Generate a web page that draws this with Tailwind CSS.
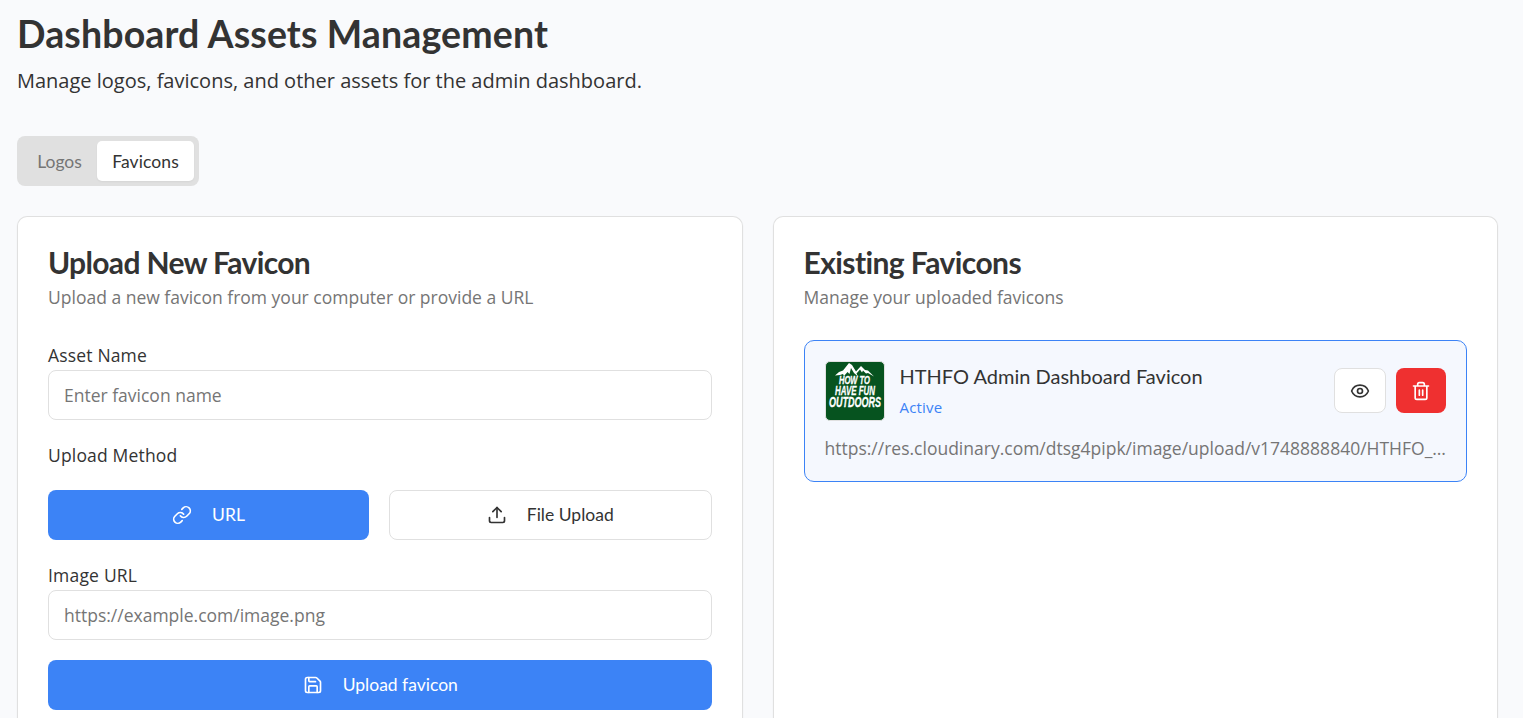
<!DOCTYPE html>
<html lang="en">
<head>
<meta charset="utf-8">
<title>Dashboard Assets Management</title>
<script src="https://cdn.jsdelivr.net/npm/@tailwindcss/browser@4"></script>
</head>
<body class="h-[718px] overflow-hidden bg-[#f9fafc] font-['Open_Sans',sans-serif] text-[17.5px] text-[#333333]">
<main class="h-[718px] overflow-hidden pl-[17px] pr-[25px] pt-[11px]">
  <h1 class="h-[45px] whitespace-nowrap font-['Lato',sans-serif] text-[37.5px] font-bold leading-[45px] tracking-[0.13px]">Dashboard Assets Management</h1>
  <p class="mt-[10px] h-[30px] text-[20px] leading-[30px]">Manage logos, favicons, and other assets for the admin dashboard.</p>

  <div class="mt-10 flex h-[50px] w-[182px] rounded-lg bg-[#e0e0e0] p-[5px] font-['Lato',sans-serif] leading-10">
    <button class="w-[75px] pt-px text-[#757575]">Logos</button>
    <button class="w-[97px] rounded-[5px] bg-white pt-px tracking-[0.1px] shadow-xs">Favicons</button>
  </div>

  <div class="mt-[30px] grid grid-cols-2 gap-[30px]">
    <section class="h-[532px] rounded-t-[10px] border border-b-0 border-[#e0e0e0] bg-white px-[30px] pt-[30px] shadow-xs">
      <h2 class="h-[30px] whitespace-nowrap font-['Lato',sans-serif] text-[30px] font-bold leading-[30px] tracking-[-0.66px]">Upload New Favicon</h2>
      <p class="mt-2 h-[25px] leading-[25px] text-[#757575]">Upload a new favicon from your computer or provide a URL</p>

      <label class="mt-[33px] block h-[25px] font-medium leading-[25px] tracking-[0.17px]">Asset Name</label>
      <input class="mt-[2px] block h-[50px] w-full rounded-lg border border-[#e0e0e0] bg-white px-[15px] placeholder:text-[#757575]" placeholder="Enter favicon name">

      <label class="mt-[23px] block h-[25px] font-medium leading-[25px] tracking-[0.17px]">Upload Method</label>
      <div class="mt-[22px] grid grid-cols-[321px_1fr] gap-5 font-['Lato',sans-serif]">
        <button class="flex h-[50px] items-center justify-center gap-5 rounded-lg bg-[#3c83f6] text-white">
          <svg class="size-5" viewBox="0 0 24 24" fill="none" stroke="currentColor" stroke-width="2" stroke-linecap="round" stroke-linejoin="round"><path d="M10 13a5 5 0 0 0 7.54.54l3-3a5 5 0 0 0-7.07-7.07l-1.72 1.71"/><path d="M14 11a5 5 0 0 0-7.54-.54l-3 3a5 5 0 0 0 7.07 7.07l1.71-1.71"/></svg>
          <span>URL</span>
        </button>
        <button class="flex h-[50px] items-center justify-center gap-5 rounded-lg border border-[#e0e0e0] bg-white">
          <svg class="size-5" viewBox="0 0 24 24" fill="none" stroke="currentColor" stroke-width="2" stroke-linecap="round" stroke-linejoin="round"><path d="M21 15v4a2 2 0 0 1-2 2H5a2 2 0 0 1-2-2v-4"/><path d="m17 8-5-5-5 5"/><path d="M12 3v12"/></svg>
          <span>File Upload</span>
        </button>
      </div>

      <label class="mt-[23px] block h-[25px] font-medium leading-[25px] tracking-[0.2px]">Image URL</label>
      <input class="mt-[2px] block h-[50px] w-full rounded-lg border border-[#e0e0e0] bg-white px-[15px] placeholder:text-[#757575]" placeholder="https://example.com/image.png">

      <button class="mt-5 flex h-[50px] w-full items-center justify-center gap-5 rounded-lg bg-[#3c83f6] pl-px font-['Lato',sans-serif] text-white">
        <svg class="size-5" viewBox="0 0 24 24" fill="none" stroke="currentColor" stroke-width="2" stroke-linecap="round" stroke-linejoin="round"><path d="M15.2 3a2 2 0 0 1 1.4.6l3.8 3.8a2 2 0 0 1 .6 1.4V19a2 2 0 0 1-2 2H5a2 2 0 0 1-2-2V5a2 2 0 0 1 2-2z"/><path d="M17 21v-7a1 1 0 0 0-1-1H8a1 1 0 0 0-1 1v7"/><path d="M7 3v4a1 1 0 0 0 1 1h7"/></svg>
        <span>Upload favicon</span>
      </button>
    </section>

    <section class="h-[532px] min-w-0 rounded-t-[10px] border border-b-0 border-[#e0e0e0] bg-white px-[30px] pt-[30px] shadow-xs">
      <h2 class="h-[30px] whitespace-nowrap font-['Lato',sans-serif] text-[30px] font-bold leading-[30px] tracking-[-0.58px]">Existing Favicons</h2>
      <p class="mt-2 h-[25px] leading-[25px] text-[#757575]">Manage your uploaded favicons</p>

      <article class="mt-[30px] h-[142px] rounded-[10px] border border-[#3c83f6] bg-[#f5f8fe] px-5 pt-5">
        <div class="flex h-[60px] items-start">
          <svg class="size-[60px] shrink-0" viewBox="0 0 60 60">
            <rect x=".5" y=".5" width="59" height="59" rx="4.5" fill="#06531f" stroke="#e0e0e0"/>
            <path d="M10 14.500l4-3.500 4-1.500 6-7.500 3 2 4 6.500 5-5.500 4 4 3 .5 6 6-6-3.500-2 .5-3-3-1 2-2-3-3.500 4 1.500 3-4-3.500-3-5-1.500 6-2-2-3.500 4-1-2-3 1z" fill="#fff"/>
            <g fill="#fff" stroke="#fff" stroke-width=".3" font-family="Liberation Sans Narrow, Liberation Sans" font-weight="700" font-style="italic">
              <text x="14" y="23" font-size="11.600" textLength="31" lengthAdjust="spacingAndGlyphs">HOW TO</text>
              <text x="10" y="34.300" font-size="13.600" textLength="40" lengthAdjust="spacingAndGlyphs">HAVE FUN</text>
              <text x="4" y="45.700" font-size="13.800" textLength="52" lengthAdjust="spacingAndGlyphs">OUTDOORS</text>
            </g>
          </svg>
          <div class="ml-[15px] flex-1 whitespace-nowrap">
            <h3 class="h-[30px] font-['Lato',sans-serif] text-[20px] leading-[30px]">HTHFO Admin Dashboard Favicon</h3>
            <p class="mt-[6px] h-[20px] text-[15px] leading-[20px] tracking-[0.2px] text-[#3c83f6]">Active</p>
          </div>
          <div class="mt-[7px] flex gap-[10px]">
            <button class="flex h-[45px] w-[52px] items-center justify-center rounded-lg border border-[#e0e0e0] bg-white" aria-label="View">
              <svg class="size-5" viewBox="0 0 24 24" fill="none" stroke="currentColor" stroke-width="2" stroke-linecap="round" stroke-linejoin="round"><path d="M2.062 12.348a1 1 0 0 1 0-.696 10.750 10.750 0 0 1 19.876 0 1 1 0 0 1 0 .696 10.750 10.750 0 0 1-19.876 0"/><circle cx="12" cy="12" r="3"/></svg>
            </button>
            <button class="flex h-[45px] w-[50px] items-center justify-center rounded-lg bg-[#ef3030] text-white" aria-label="Delete">
              <svg class="size-5" viewBox="0 0 24 24" fill="none" stroke="currentColor" stroke-width="2" stroke-linecap="round" stroke-linejoin="round"><path d="M3 6h18M19 6v14a2 2 0 0 1-2 2H7a2 2 0 0 1-2-2V6M8 6V4a2 2 0 0 1 2-2h4a2 2 0 0 1 2 2v2M10 11v6M14 11v6"/></svg>
            </button>
          </div>
        </div>
        <p class="mt-[15px] h-[25px] truncate leading-[25px] text-[#757575]">https://res.cloudinary.com/dtsg4pipk/image/upload/v1748888840/HTHFO_Favicon.png</p>
      </article>
    </section>
  </div>
</main>
</body>
</html>
